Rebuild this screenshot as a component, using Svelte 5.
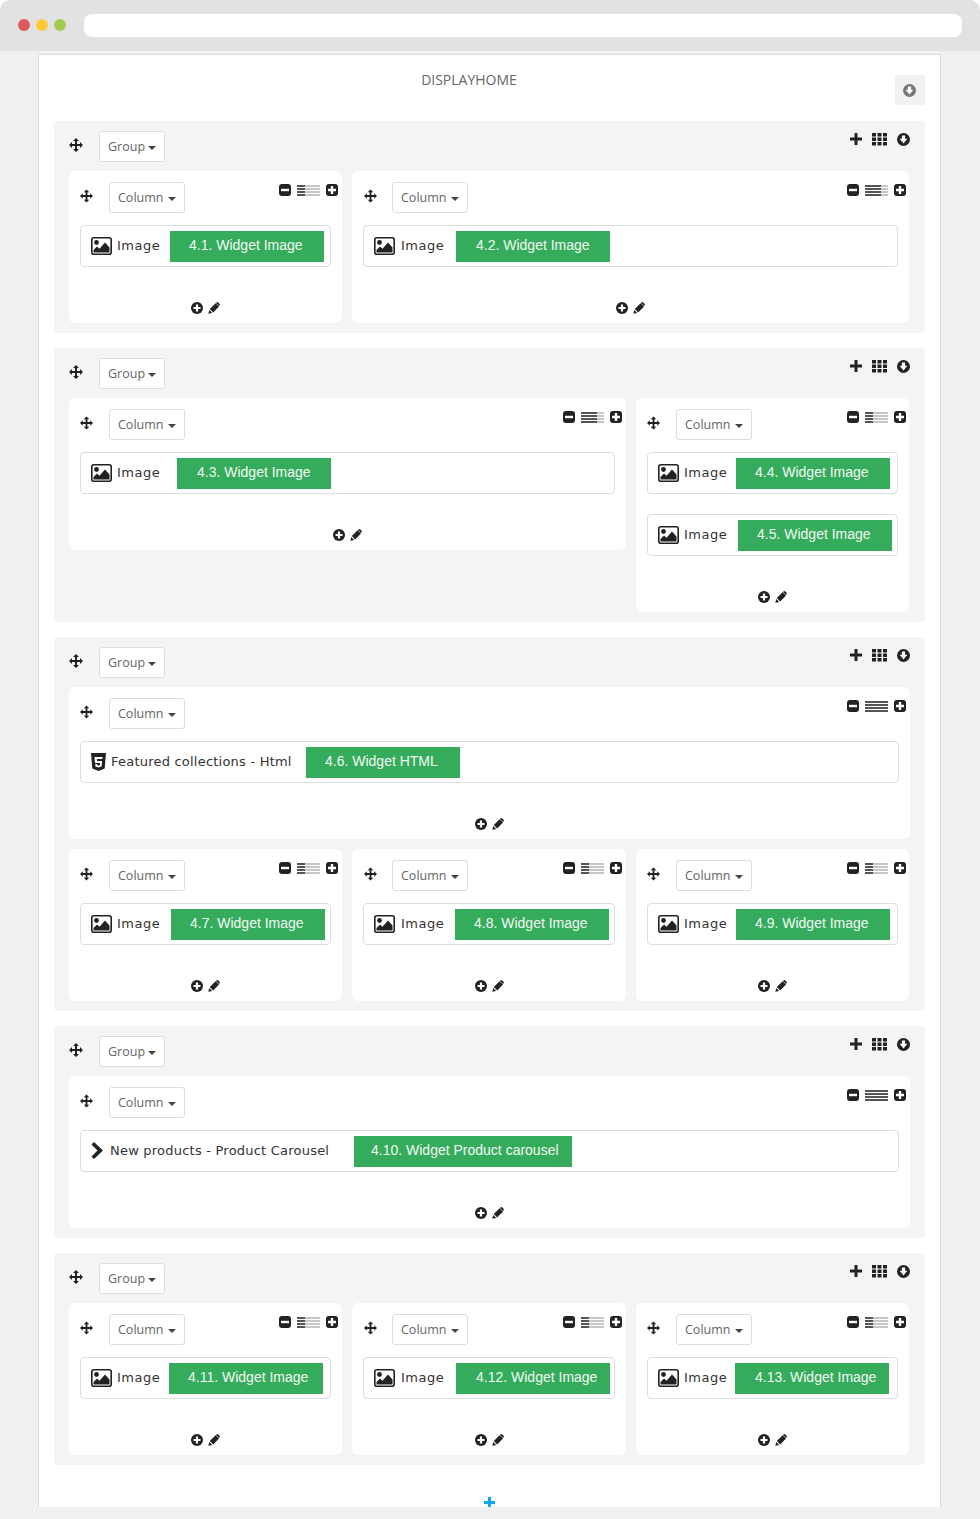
<script>
  // offset = label start measured from the left edge of the widget box
  const img = (n, offset, pad = 19) => ({ icon: 'image', name: 'Image', label: `4.${n}. Widget Image`, offset, width: 154, pad })

  const groups = [
    { cols: [
      { span: 1, widgets: [img(1, 90)] },
      { span: 2, mid: true, end: true, widgets: [img(2, 93, 20)] }
    ] },
    { cols: [
      { span: 2, widgets: [img(3, 97, 20)] },
      { span: 1, end: true, widgets: [img(4, 89), img(5, 91)] }
    ] },
    { cols: [
      { span: 3, widgets: [{ icon: 'html', name: 'Featured collections - Html', label: '4.6. Widget HTML', offset: 226, width: 154, pad: 19 }] },
      { span: 1, widgets: [img(7, 91)] },
      { span: 1, mid: true, widgets: [img(8, 92)] },
      { span: 1, end: true, widgets: [img(9, 89)] }
    ] },
    { cols: [
      { span: 3, widgets: [{ icon: 'chevron', name: 'New products - Product Carousel', label: '4.10. Widget Product carousel', offset: 274, width: 218, pad: 17 }] }
    ] },
    { cols: [
      { span: 1, widgets: [img(11, 89)] },
      { span: 1, mid: true, widgets: [img(12, 93, 20)] },
      { span: 1, end: true, widgets: [img(13, 88, 20)] }
    ] }
  ]

  const barRows = [0, 3, 6, 9]
</script>

{#snippet move(size)}
  <svg class="move" width={size} height="14" viewBox="0 0 14 14">
    <path d="M7 0l3 3H4zM7 14l-3-3h6zM0 7l3-3v6zM14 7l-3-3v6zM6 3h2v3h3v2H8v3H6V8H3V6h3z" fill="#222" />
  </svg>
{/snippet}

{#snippet arrowCircle(color)}
  <svg width="13" height="13" viewBox="0 0 13 13">
    <circle cx="6.5" cy="6.5" r="6.5" fill={color} />
    <path d="M4.900 2.500h3.200v3.200h2.300l-3.900 4.800-3.900-4.800h2.300z" fill="#fff" />
  </svg>
{/snippet}

{#snippet dropdown(text)}
  <button class="dropdown" type="button">{text}<span class="caret"></span></button>
{/snippet}

{#snippet widgetIcon(kind)}
  {#if kind === 'image'}
    <svg class="wicon" width="21" height="18" viewBox="0 0 21 18">
      <rect x=".8" y=".8" width="19.400" height="16.400" rx="2" fill="#fff" stroke="#222" stroke-width="1.600" />
      <circle cx="5.500" cy="5.500" r="2.400" fill="#222" />
      <path d="M2.500 15.500V13L6 9.500l2.500 2.200L14 5.500l4.500 5v5z" fill="#222" />
    </svg>
  {:else if kind === 'html'}
    <svg class="wicon" width="15" height="18" viewBox="0 0 15 18">
      <path d="M0 0h15l-1.300 15.500L7.500 18l-6.200-2.500z" fill="#222" />
      <path d="M3.500 4h8l-.2 2H5.800l.2 2h5.100l-.5 5.500-3.100 1-3.100-1-.2-2.500H6l.1 1 1.400.5 1.400-.5.2-2H3.900z" fill="#fff" />
    </svg>
  {:else}
    <svg class="wicon chev" width="13" height="17" viewBox="0 0 13 17">
      <path d="M3 0l9 8.500L3 17 .5 14.500l6-6-6-6z" fill="#222" />
    </svg>
  {/if}
{/snippet}

<div class="page">
  <div class="bar">
    <span class="dot red"></span>
    <span class="dot yellow"></span>
    <span class="dot green"></span>
    <div class="url"></div>
  </div>

  <div class="main">
    <div class="panel">
      <div class="panel-head">
        <div class="title">DISPLAYHOME</div>
        <div class="collapse">{@render arrowCircle('#777')}</div>
      </div>

      {#each groups as group}
        <section class="group">
          <div class="group-head">
            {@render move(14)}
            {@render dropdown('Group')}
            <div class="group-tools">
              <svg width="12" height="12" viewBox="0 0 12 12"><path d="M4.500 0h3v4.500H12v3H7.500V12h-3V7.500H0v-3h4.500z" fill="#222" /></svg>
              <svg width="15" height="13" viewBox="0 0 15 13">
                {#each [0, 4.500, 9] as y}
                  {#each [0, 5.500, 11] as x}
                    <rect {x} {y} width="4" height="3.500" fill="#222" />
                  {/each}
                {/each}
              </svg>
              {@render arrowCircle('#222')}
            </div>
          </div>

          <div class="cols">
            {#each group.cols as col}
              <div class="col span{col.span}" class:mid={col.mid}>
                <div class="col-head" class:end={col.end}>
                  {@render move(13)}
                  {@render dropdown('Column')}
                  <div class="col-tools">
                    <svg width="12" height="12" viewBox="0 0 12 12">
                      <rect width="12" height="12" rx="3" fill="#222" />
                      <rect x="2" y="4.800" width="8" height="2.400" fill="#fff" />
                    </svg>
                    <svg width="23" height="12" viewBox="0 0 23 12">
                      {#each barRows as y}
                        <rect x="0" y={y + 1} width="23" height="2" fill="#c6c6c6" />
                        <rect x="0" y={y + 1} width={col.span === 3 ? 23 : col.span * 8} height="2" fill="#555" />
                      {/each}
                    </svg>
                    <svg width="12" height="12" viewBox="0 0 12 12">
                      <rect width="12" height="12" rx="3" fill="#222" />
                      <path d="M4.800 2h2.400v2.800H10v2.400H7.200V10H4.800V7.200H2V4.800h2.800z" fill="#fff" />
                    </svg>
                  </div>
                </div>

                <div class="widgets">
                  {#each col.widgets as w}
                    <div class="widget">
                      <div class="widget-name" class:long={w.icon !== 'image'} style="width: {w.offset - 11}px">
                        {@render widgetIcon(w.icon)}
                        <span>{w.name}</span>
                      </div>
                      <div class="widget-label" style="width: {w.width}px; padding-left: {w.pad}px">{w.label}</div>
                    </div>
                  {/each}
                </div>

                <div class="col-add">
                  <svg width="12" height="12" viewBox="0 0 12 12">
                    <circle cx="6" cy="6" r="6" fill="#222" />
                    <path d="M4.900 2.500h2.200v2.400h2.400v2.200H7.100v2.400H4.900V7.100H2.500V4.900h2.400z" fill="#fff" />
                  </svg>
                  <svg width="12" height="12" viewBox="0 0 12 12">
                    <path d="M.3 11.700L1.300 8l2.900 2.900zM1.800 7l5.800-5.800L11 4.600l-5.800 5.800zM8.400.6q1-.9 1.900-.1l1.200 1.200q.8.9-.1 1.900l-.3.3L8 1z" fill="#222" />
                  </svg>
                </div>
              </div>
            {/each}
          </div>
        </section>
      {/each}

      <div class="panel-foot">
        <svg width="11" height="11" viewBox="0 0 11 11"><path d="M4 0h3v4h4v3H7v4H4V7H0V4h4z" fill="#0fa8ee" /></svg>
      </div>
    </div>
  </div>
</div>

<style>
  :global(body) {
    background: #fff;
  }

  .page {
    width: 980px;
    font-family: "Open Sans", sans-serif;
    color: #333;
  }

  .bar {
    height: 51px;
    box-sizing: border-box;
    padding: 14px 18px 0;
    display: flex;
    background: #e2e2e2;
    border-radius: 10px 10px 0 0;
  }

  .dot {
    width: 12px;
    height: 12px;
    margin: 5px 6px 0 0;
    border-radius: 50%;
  }

  .red { background: #df5a5f; }
  .yellow { background: #fdcb3a; }
  .green { background: #a0cc52; }

  .url {
    width: 878px;
    height: 23px;
    margin-left: 12px;
    background: #fff;
    border-radius: 8px;
  }

  .main {
    height: 1468px;
    padding-top: 3px;
    box-sizing: border-box;
    background: #eff0f2;
  }

  .panel {
    width: 903px;
    height: 1453px;
    margin-left: 38px;
    padding: 0 15px;
    box-sizing: border-box;
    background: #fff;
    border: 1px solid #dcdde0;
    border-bottom: 0;
    overflow: hidden;
  }

  .panel-head {
    height: 66px;
    box-sizing: border-box;
    padding-top: 20px;
    display: flex;
    align-items: flex-start;
  }

  .title {
    flex: 1;
    margin: -5px 11px 0 0;
    line-height: 20px;
    font-size: 14px;
    text-align: center;
    color: #666;
  }

  .collapse {
    width: 30px;
    height: 30px;
    box-sizing: border-box;
    padding-right: 2px;
    display: flex;
    align-items: center;
    justify-content: center;
    background: #f1f1f1;
  }

  .group {
    margin-bottom: 15px;
    padding: 0 16px 10px 15px;
    background: #f4f4f4;
    border-radius: 4px;
  }

  .group-head {
    height: 50px;
    box-sizing: border-box;
    padding-top: 10px;
    display: flex;
    align-items: flex-start;
  }

  .group-head .move {
    margin-top: 7px;
    margin-right: 16px;
  }

  .group-head .dropdown {
    width: 66px;
  }

  .group-tools {
    margin: 2px -1px 0 auto;
    display: flex;
    gap: 10px;
    align-items: flex-start;
  }

  .dropdown {
    height: 31px;
    box-sizing: border-box;
    padding: 0 8px 1px;
    display: flex;
    align-items: center;
    background: #fff;
    border: 1px solid #ddd;
    border-radius: 3px;
    font-family: inherit;
    font-size: 12.5px;
    color: #666;
  }

  .caret {
    margin: 3px 0 0 auto;
    border-top: 4px solid #444;
    border-left: 4px solid transparent;
    border-right: 4px solid transparent;
  }

  .cols {
    display: grid;
    grid-template-columns: 273px 274px 273px;
    gap: 10px;
    align-items: start;
  }

  .col {
    background: #fff;
    border-radius: 6px;
  }

  .span2 { grid-column: span 2; }
  .span3 { grid-column: span 3; margin-right: -1px; }

  .col-head {
    height: 54px;
    box-sizing: border-box;
    padding: 11px 4px 0 11px;
    display: flex;
    align-items: flex-start;
  }

  .col-head.end {
    padding-right: 3px;
  }

  .col-head .move {
    margin-top: 7px;
    margin-right: 16px;
  }

  .col-head .dropdown {
    width: 76px;
  }

  .mid .col-head .move {
    margin-left: 1px;
    margin-right: 15px;
  }

  .col-tools {
    margin: 2px 0 0 auto;
    display: flex;
    gap: 6px;
  }

  .widgets {
    padding: 0 11px;
    display: flex;
    flex-direction: column;
    gap: 20px;
  }

  .widget {
    height: 42px;
    box-sizing: border-box;
    padding: 5px 10px 0;
    display: flex;
    align-items: flex-start;
    background: #fff;
    border: 1px solid #ddd;
    border-radius: 4px;
  }

  .widget-name {
    flex: none;
    height: 31px;
    padding-bottom: 2px;
    box-sizing: border-box;
    display: flex;
    align-items: center;
    white-space: nowrap;
    font-family: "DejaVu Sans", sans-serif;
    font-size: 13px;
    letter-spacing: .5px;
    color: #333;
  }

  .widget-name.long {
    letter-spacing: .22px;
  }

  .wicon {
    flex: none;
    margin-right: 5px;
  }

  .mid .wicon {
    margin-right: 6px;
  }

  .wicon.chev {
    margin-right: 6px;
  }

  .widget-label {
    flex: none;
    height: 31px;
    padding-bottom: 3px;
    box-sizing: border-box;
    display: flex;
    align-items: center;
    background: #35ac5b;
    font-family: "Liberation Sans", sans-serif;
    font-size: 14px;
    white-space: nowrap;
    color: #f2faf5;
  }

  .col-add {
    height: 56px;
    box-sizing: border-box;
    padding-top: 35px;
    display: flex;
    justify-content: center;
    gap: 5px;
  }

  .col-add svg {
    display: block;
  }

  .panel-foot {
    padding-top: 17px;
  }

  .panel-foot svg {
    display: block;
    margin: 0 auto;
  }
</style>
